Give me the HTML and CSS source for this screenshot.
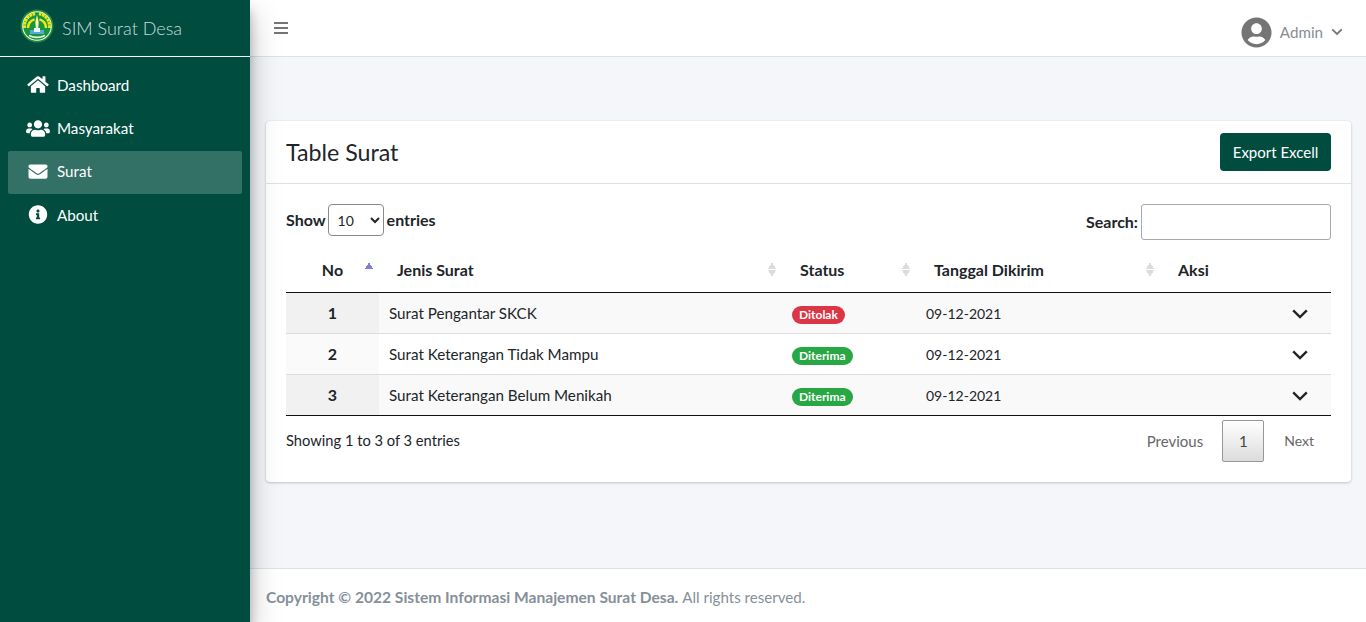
FILE: index.html
```html
<!DOCTYPE html>
<html lang="en">

<head>
    <meta charset="UTF-8">
    <meta name="viewport" content="width=device-width, initial-scale=1.0">
    <title>Table Surat</title>
    <link rel="stylesheet" href="styles.css">
</head>

<body>
    <div class="wrapper">
        <aside class="sidebar">
            <div class="brand">
                <svg class="brand-logo" viewBox="0 0 34 34">
                    <circle cx="17" cy="17" r="16.5" fill="#1c8c3c" />
                    <circle cx="17" cy="17" r="14.8" fill="#f4f8ee" />
                    <circle cx="17" cy="17" r="13.8" fill="#17953f" />
                    <path d="M4.6 19a12.6 12.6 0 0 1 10.4-14.4M29.4 19a12.6 12.6 0 0 0-10.4-14.4" fill="none" stroke="#f2e61c" stroke-width="3.2" stroke-dasharray="2.8 .6" />
                    <path d="M8 19a9.2 9.2 0 0 1 6.6-8.6M26 19a9.2 9.2 0 0 0-6.6-8.6" fill="none" stroke="#f2e61c" stroke-width="2.4" />
                    <path d="M17 6l1.7 7-.5 6h-2.4l-.5-6z" fill="#fbf6b0" />
                    <path d="M10 21h14v4H10z" fill="#5aa7dc" />
                    <path d="M14 19h6v4h-6z" fill="#e8f4f8" />
                    <path d="M9 26.5c5 2.4 11 2.4 16 0" fill="none" stroke="#eef6e6" stroke-width="1.6" />
                </svg>
                <span class="brand-text">SIM Surat Desa</span>
            </div>
            <nav class="side-nav">
                <a class="nav-link" href="#">
                    <svg class="nav-icon" viewBox="0 0 576 512"><path d="M280.37 148.26L96 300.11V464a16 16 0 0 0 16 16l112.06-.29a16 16 0 0 0 15.92-16V368a16 16 0 0 1 16-16h64a16 16 0 0 1 16 16v95.64a16 16 0 0 0 16 16.05L464 480a16 16 0 0 0 16-16V300L295.67 148.26a12.19 12.19 0 0 0-15.3 0zM571.6 251.47L488 182.56V44.05a12 12 0 0 0-12-12h-56a12 12 0 0 0-12 12v72.61L318.47 43a48 48 0 0 0-61 0L4.34 251.47a12 12 0 0 0-1.6 16.9l25.5 31A12 12 0 0 0 45.15 301l235.22-193.74a12.19 12.19 0 0 1 15.3 0L530.9 301a12 12 0 0 0 16.9-1.6l25.5-31a12 12 0 0 0-1.7-16.93z" /></svg>
                    Dashboard
                </a>
                <a class="nav-link" href="#">
                    <svg class="nav-icon" viewBox="0 0 640 512"><path d="M96 224c35.3 0 64-28.7 64-64s-28.7-64-64-64-64 28.7-64 64 28.7 64 64 64zm448 0c35.3 0 64-28.7 64-64s-28.7-64-64-64-64 28.7-64 64 28.7 64 64 64zm32 32h-64c-17.6 0-33.5 7.1-45.1 18.6 40.3 22.1 68.9 62 75.1 109.4h66c17.7 0 32-14.3 32-32v-32c0-35.3-28.7-64-64-64zm-256 0c61.9 0 112-50.1 112-112S381.9 32 320 32 208 82.1 208 144s50.1 112 112 112zm76.8 32h-8.3c-20.8 10-43.9 16-68.5 16s-47.6-6-68.5-16h-8.3C179.6 288 128 339.6 128 403.2V432c0 26.5 21.5 48 48 48h288c26.5 0 48-21.5 48-48v-28.8c0-63.6-51.6-115.2-115.2-115.2zm-223.7-13.4C161.5 263.1 145.6 256 128 256H64c-35.3 0-64 28.7-64 64v32c0 17.7 14.3 32 32 32h65.9c6.3-47.4 34.9-87.3 75.2-109.4z" /></svg>
                    Masyarakat
                </a>
                <a class="nav-link active" href="#">
                    <svg class="nav-icon" viewBox="0 0 512 512"><path d="M502.3 190.8c3.9-3.1 9.7-.2 9.7 4.7V400c0 26.5-21.5 48-48 48H48c-26.5 0-48-21.5-48-48V195.6c0-5 5.7-7.8 9.7-4.7 22.4 17.4 52.1 39.5 154.1 113.6 21.1 15.4 56.7 47.8 92.2 47.6 35.7.3 72-32.8 92.3-47.6 102-74.1 131.6-96.3 154-113.7zM256 320c23.2.4 56.6-29.2 73.4-41.4 132.7-96.3 142.8-104.7 173.4-128.7 5.8-4.5 9.2-11.5 9.2-18.9v-19c0-26.5-21.5-48-48-48H48C21.5 64 0 85.5 0 112v19c0 7.4 3.4 14.3 9.2 18.9 30.6 23.9 40.7 32.4 173.4 128.7 16.8 12.2 50.2 41.8 73.4 41.4z" /></svg>
                    Surat
                </a>
                <a class="nav-link" href="#">
                    <svg class="nav-icon" viewBox="0 0 512 512"><path d="M256 8C119.043 8 8 119.083 8 256c0 136.997 111.043 248 248 248s248-111.003 248-248C504 119.083 392.957 8 256 8zm0 110c23.196 0 42 18.804 42 42s-18.804 42-42 42-42-18.804-42-42 18.804-42 42-42zm56 254c0 6.627-5.373 12-12 12h-88c-6.627 0-12-5.373-12-12v-24c0-6.627 5.373-12 12-12h12v-64h-12c-6.627 0-12-5.373-12-12v-24c0-6.627 5.373-12 12-12h64c6.627 0 12 5.373 12 12v100h12c6.627 0 12 5.373 12 12v24z" /></svg>
                    About
                </a>
            </nav>
        </aside>

        <div class="main">
            <header class="topbar">
                <svg class="menu-icon" viewBox="0 0 14 14"><path d="M0 1h14v2H0zM0 6h14v2H0zM0 11h14v2H0z" /></svg>
                <div class="user-menu">
                    <svg class="user-icon" viewBox="0 0 496 512"><path d="M248 8C111 8 0 119 0 256s111 248 248 248 248-111 248-248S385 8 248 8zm0 96c48.6 0 88 39.4 88 88s-39.4 88-88 88-88-39.4-88-88 39.4-88 88-88zm0 344c-58.7 0-111.3-26.6-146.5-68.2 18.8-35.4 55.6-59.8 98.5-59.8 2.4 0 4.8.4 7.1 1.1 13 4.2 26.6 6.9 40.9 6.9 14.3 0 28-2.7 40.9-6.9 2.3-.7 4.7-1.1 7.1-1.1 42.9 0 79.7 24.4 98.5 59.8C359.3 421.4 306.7 448 248 448z" /></svg>
                    <span class="user-name">Admin</span>
                    <svg class="user-caret" viewBox="0 0 12 8"><path d="M1.2 1.4L6 6l4.8-4.6" /></svg>
                </div>
            </header>

            <main class="content">
                <section class="card">
                    <div class="card-header">
                        <h1 class="card-title">Table Surat</h1>
                        <button class="btn-export">Export Excell</button>
                    </div>
                    <div class="card-body">
                        <div class="table-top">
                            <label class="length-label">
                                <span>Show</span>
                                <select class="length-select">
                                    <option>10</option>
                                </select>
                                <span>entries</span>
                            </label>
                            <label class="search-label"><span class="search-text">Search:</span> <input class="search-input" type="search"></label>
                        </div>
                        <table class="data-table">
                            <colgroup>
                                <col class="col-no">
                                <col class="col-jenis">
                                <col class="col-status">
                                <col class="col-tanggal">
                                <col class="col-aksi">
                            </colgroup>
                            <thead>
                                <tr>
                                    <th class="th-center sort-asc">No</th>
                                    <th class="sortable">Jenis Surat</th>
                                    <th class="sortable">Status</th>
                                    <th class="sortable">Tanggal Dikirim</th>
                                    <th>Aksi</th>
                                </tr>
                            </thead>
                            <tbody>
                                <tr>
                                    <td class="cell-no">1</td>
                                    <td>Surat Pengantar SKCK</td>
                                    <td><span class="badge badge-red">Ditolak</span></td>
                                    <td class="cell-date">09-12-2021</td>
                                    <td class="cell-action"><svg class="row-caret" viewBox="0 0 16 10"><path d="M1.2 1.4L8 8l6.8-6.6" /></svg></td>
                                </tr>
                                <tr>
                                    <td class="cell-no">2</td>
                                    <td>Surat Keterangan Tidak Mampu</td>
                                    <td><span class="badge badge-green">Diterima</span></td>
                                    <td class="cell-date">09-12-2021</td>
                                    <td class="cell-action"><svg class="row-caret" viewBox="0 0 16 10"><path d="M1.2 1.4L8 8l6.8-6.6" /></svg></td>
                                </tr>
                                <tr>
                                    <td class="cell-no">3</td>
                                    <td>Surat Keterangan Belum Menikah</td>
                                    <td><span class="badge badge-green">Diterima</span></td>
                                    <td class="cell-date">09-12-2021</td>
                                    <td class="cell-action"><svg class="row-caret" viewBox="0 0 16 10"><path d="M1.2 1.4L8 8l6.8-6.6" /></svg></td>
                                </tr>
                            </tbody>
                        </table>
                        <div class="table-bottom">
                            <div class="table-info">Showing 1 to 3 of 3 entries</div>
                            <div class="pagination">
                                <a class="page-link" href="#">Previous</a>
                                <a class="page-link current" href="#">1</a>
                                <a class="page-link page-next" href="#">Next</a>
                            </div>
                        </div>
                    </div>
                </section>
            </main>

            <footer class="footer"><strong>Copyright &copy; 2022 Sistem Informasi Manajemen Surat Desa.</strong> <span>All rights reserved.</span></footer>
        </div>
    </div>
</body>

</html>
```

FILE: styles.css
```css
* {
    box-sizing: border-box;
}

body {
    margin: 0;
    font-family: Lato, "Noto Sans", sans-serif;
    font-size: 16px;
    color: #212529;
    background: #f4f6f9;
}

.wrapper {
    display: flex;
    height: 622px;
    overflow: hidden;
}

.sidebar {
    width: 250px;
    flex-shrink: 0;
    background: #004d40;
    box-shadow: 0 14px 28px rgba(0, 0, 0, .25), 0 10px 10px rgba(0, 0, 0, .22);
    position: relative;
    z-index: 2;
}

.brand {
    height: 57px;
    display: flex;
    align-items: center;
    padding: 0 0 4px 20px;
    border-bottom: 1px solid #fff;
}

.brand-logo {
    width: 34px;
    height: 34px;
    margin-right: 8px;
}

.brand-text {
    font-size: 18px;
    font-weight: 300;
    color: rgba(255, 255, 255, .8);
    padding-top: 3px;
}

.side-nav {
    padding: 7px 8px;
    display: flex;
    flex-direction: column;
}

.nav-link {
    height: 43.4px;
    display: flex;
    align-items: center;
    padding: 0 0 2px 18px;
    border-radius: 2px;
    color: #fff;
    text-decoration: none;
    font-size: 15.2px;
}

.nav-link.active {
    background: rgba(255, 255, 255, .2);
}

.nav-icon {
    width: 24px;
    height: 19px;
    margin-right: 7px;
    fill: #fff;
}

.main {
    flex: 1;
    display: flex;
    flex-direction: column;
}

.topbar {
    height: 57px;
    background: #fff;
    border-bottom: 1px solid #dee2e6;
    display: flex;
    align-items: center;
    justify-content: space-between;
    padding: 0 23px 0 24px;
}

.menu-icon {
    width: 14px;
    height: 14px;
    fill: #757575;
}

.user-menu {
    display: flex;
    align-items: center;
    color: #878d93;
    padding-top: 8px;
}

.user-icon {
    width: 31px;
    height: 31px;
    fill: #757575;
    margin-right: 8px;
}

.user-name {
    font-size: 15.2px;
}

.user-caret {
    width: 12px;
    height: 8px;
    margin-left: 8px;
    fill: none;
    stroke: #757575;
    stroke-width: 1.8;
}

.content {
    flex: 1;
    padding: 64px 15px 0 16px;
}

.card {
    height: 361px;
    background: #fff;
    border-radius: 4px;
    box-shadow: 0 0 1px rgba(0, 0, 0, .125), 0 1px 3px rgba(0, 0, 0, .2);
}

.card-header {
    height: 63px;
    display: flex;
    align-items: center;
    justify-content: space-between;
    padding: 0 20px;
    border-bottom: 1px solid #dee2e6;
}

.card-title {
    margin: 0 0 1px;
    font-size: 23.2px;
    font-weight: 400;
}

.btn-export {
    width: 111px;
    height: 38px;
    padding: 0 0 1px;
    border: none;
    border-radius: 4px;
    background: #004d40;
    color: #fff;
    font-family: inherit;
    font-size: 15px;
}

.card-body {
    padding: 20px 20px 0;
}

.table-top {
    display: flex;
    justify-content: space-between;
    height: 45px;
    font-weight: 700;
}

.length-label {
    display: flex;
    align-items: center;
    gap: 3px;
    height: 32px;
}

.length-label span {
    padding-bottom: 2px;
}

.length-select {
    width: 56px;
    height: 32px;
    margin-left: -1px;
    padding: 0 5px;
    border: 1px solid #8a8a8a;
    border-radius: 4px;
    background: #fff;
    font-family: inherit;
    font-size: 14px;
    color: #212529;
}

.search-label {
    display: flex;
    align-items: center;
    gap: 3px;
    height: 36px;
}

.search-text {
    padding-bottom: 1px;
}

.search-input {
    width: 190px;
    height: 36px;
    border: 1px solid #aaa;
    border-radius: 3px;
    background: #fff;
}

.data-table {
    width: 100%;
    table-layout: fixed;
    border-collapse: collapse;
    font-size: 15.2px;
}

.col-no {
    width: 93px;
}

.col-jenis {
    width: 403px;
}

.col-status {
    width: 134px;
}

.col-tanggal {
    width: 244px;
}

.col-aksi {
    width: 171px;
}

.data-table th {
    height: 43px;
    padding: 0 18px 2px;
    text-align: left;
    font-size: 16px;
    font-weight: 700;
    border-bottom: 1px solid #111;
    position: relative;
}

.data-table .th-center {
    text-align: center;
}

.sortable::after,
.sort-asc::after {
    content: "";
    position: absolute;
    right: 6px;
    top: 13px;
    width: 8px;
    height: 15px;
    background: conic-gradient(from 150deg at 50% 0, #dcdcdc 60deg, transparent 0) top / 8px 7px no-repeat,
        conic-gradient(from -30deg at 50% 100%, #dcdcdc 60deg, transparent 0) bottom / 8px 7px no-repeat;
}

.sort-asc::after {
    height: 7px;
    background: conic-gradient(from 150deg at 50% 0, #7f7fd5 60deg, transparent 0) top / 8px 7px no-repeat;
}

.data-table td {
    height: 41px;
    padding: 0 10px;
    border-top: 1px solid #ddd;
}

.data-table tr:nth-child(odd) td {
    background: #f9f9f9;
}

.data-table td.cell-no {
    text-align: center;
    font-size: 16px;
    font-weight: 700;
    background: #fafafa;
}

.data-table tr:nth-child(odd) td.cell-no {
    background: #f1f1f1;
}

.data-table tbody tr:first-child td {
    border-top: none;
}

.data-table tbody tr:last-child td {
    border-bottom: 1px solid #111;
}

.data-table td.cell-date {
    padding-top: 2px;
    font-size: 14px;
}

.cell-action {
    text-align: right;
}

.row-caret {
    width: 16px;
    height: 10px;
    margin-right: 13px;
    fill: none;
    stroke: #212529;
    stroke-width: 2.4;
}

.badge {
    display: inline-block;
    position: relative;
    top: 1px;
    padding: 2px 7px;
    border-radius: 10px;
    color: #fff;
    font-size: 12px;
    font-weight: 700;
    line-height: 14px;
    vertical-align: middle;
}

.badge-red {
    background: #dc3545;
}

.badge-green {
    background: #28a745;
}

.table-bottom {
    display: flex;
    justify-content: space-between;
}

.table-info {
    padding-top: 15px;
    font-size: 14.7px;
}

.pagination {
    display: flex;
    padding-top: 4px;
    font-size: 15px;
}

.page-link {
    height: 42px;
    display: flex;
    align-items: center;
    padding: 0 18px 0 20px;
    color: #666;
    text-decoration: none;
}

.page-link.current {
    width: 42px;
    margin-left: 1px;
    padding: 0;
    justify-content: center;
    border: 1px solid #979797;
    border-radius: 2px;
    background: linear-gradient(to bottom, #fff, #dcdcdc);
    color: #444;
}

.page-link.page-next {
    padding-right: 17px;
    font-size: 14px;
}

.footer {
    height: 54px;
    display: flex;
    align-items: center;
    gap: 4px;
    padding: 2px 0 0 16px;
    background: #fff;
    border-top: 1px solid #dee2e6;
    color: #869099;
}

.footer strong {
    font-size: 15.6px;
}

.footer span {
    font-size: 15.1px;
}
```
